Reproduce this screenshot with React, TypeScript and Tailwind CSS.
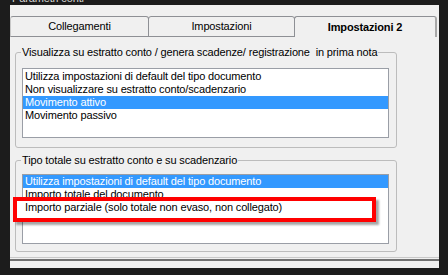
import React from "react";

const upperItems = [
  "Utilizza impostazioni di default del tipo documento",
  "Non visualizzare su estratto conto/scadenzario",
  "Movimento attivo",
  "Movimento passivo",
];

const lowerItems = [
  "Utilizza impostazioni di default del tipo documento",
  "Importo totale del documento",
  "Importo parziale (solo totale non evaso, non collegato)",
];

function ListBox({ items, selected, padTop }: { items: string[]; selected: number; padTop?: boolean }) {
  return (
    <div
      className={`ml-[6px] w-[367px] h-[70px] bg-white border border-[#9a9ea6] ${padTop ? "pt-px" : ""}`}
    >
      {items.map((item, i) => (
        <div
          key={item}
          className={`h-[13px] leading-[13px] pl-[2px] whitespace-nowrap ${
            i === selected ? "bg-[#3399ff] text-white" : "text-black"
          }`}
        >
          {item}
        </div>
      ))}
    </div>
  );
}

export default function App() {
  return (
    <div className="w-[448px] h-[275px] bg-[#1c1c1c] overflow-hidden font-['Liberation_Sans',sans-serif] text-[11px] tracking-[-0.14px]">
      {/* cut-off window caption */}
      <div className="h-[5px] overflow-hidden pl-[12px]">
        <div className="-mt-[7px] leading-[11px] text-[#d6d6d6]">Parametri conti</div>
      </div>

      <div className="relative ml-[10px] w-[429px] h-[263px] bg-[#f0f0f0] flex flex-col">
        {/* Tabs */}
        <div className="mt-[11px] flex h-[21px]">
          <div className="w-[139px] h-[21px] border border-[#8e9095] border-l-[#c8c8c8] rounded-t-[3px] flex items-center justify-center text-black">
            Collegamenti
          </div>
          <div className="-ml-px w-[147px] h-[21px] border border-[#8e9095] rounded-t-[3px] flex items-center justify-center text-black">
            Impostazioni
          </div>
          <div className="-ml-px w-[143px] h-[21px] border-t border-l border-r-2 border-[#8e9095] border-r-[#a8a8a8] rounded-t-[3px] flex items-center justify-center font-bold text-black">
            Impostazioni 2
          </div>
        </div>

        {/* Group 1 */}
        <div className="relative mt-[15px] ml-[5px] w-[382px] h-[96px] border border-[#bcbcbc] rounded-[3px]">
          <span className="absolute left-[5px] -top-[7px] px-px bg-[#f0f0f0] leading-[13px] whitespace-nowrap text-black">
            Visualizza su estratto conto / genera scadenze/ registrazione&nbsp; in prima nota
          </span>
          <div className="mt-[15px]">
            <ListBox items={upperItems} selected={2} padTop />
          </div>
        </div>

        {/* Group 2 */}
        <div className="relative mt-[12px] ml-[5px] w-[382px] h-[92px] border border-[#bcbcbc] rounded-[3px]">
          <span className="absolute left-[5px] -top-[7px] px-px bg-[#f0f0f0] leading-[13px] whitespace-nowrap text-black">
            Tipo totale su estratto conto e su scadenzario
          </span>
          <div className="mt-[13px]">
            <ListBox items={lowerItems} selected={0} />
          </div>
        </div>

        {/* bottom separator */}
        <div className="mt-[5px] h-px bg-[#c8c8c8]" />
        <div className="mt-px h-[2px] bg-[#707070]" />

        {/* red highlight */}
        <div className="absolute left-[3px] top-[192px] w-[363px] h-[25px] border-4 border-[#ff0000] bg-white shadow-[3px_3px_2px_rgba(0,0,0,0.35)] pl-[8px] leading-[13px] whitespace-nowrap text-black">
          Importo parziale (solo totale non evaso, non collegato)
        </div>
      </div>
    </div>
  );
}
